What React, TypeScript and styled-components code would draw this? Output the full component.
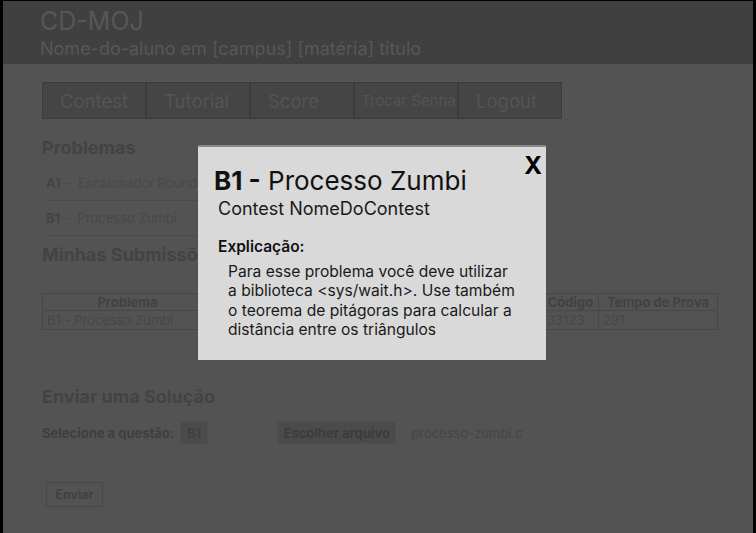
import React from "react";
import styled, { createGlobalStyle } from "styled-components";

const Global = createGlobalStyle`
  html, body { margin: 0; padding: 0; background: #000; }
  body { font-family: Inter, "Noto Sans", sans-serif; }
  * { box-sizing: border-box; }
`;

const Page = styled.div`
  position: relative;
  margin: 1px 3px 0 3px;
  height: 532px;
  background: #535353;
  overflow: hidden;
`;

const Header = styled.header`
  height: 63px;
  background: #404040;
  padding: 5px 0 0 37px;
  color: #575757;
`;

const Title = styled.div`
  font-size: 25px;
  line-height: 30px;
`;

const Subtitle = styled.div`
  margin-top: 2px;
  font-size: 18px;
  line-height: 21px;
`;

const Main = styled.main`
  display: flex;
  flex-direction: column;
  align-items: flex-start;
  padding-left: 39px;
`;

const Nav = styled.nav`
  display: flex;
  margin-top: 18px;
`;

const NavButton = styled.div<{ $small?: boolean }>`
  width: 104px;
  height: 37px;
  display: flex;
  align-items: center;
  padding-left: ${(p) => (p.$small ? "6px" : "17px")};
  background: #454545;
  border: 1px solid #3b3b3b;
  color: #545454;
  font-size: ${(p) => (p.$small ? "15px" : "18.5px")};
  white-space: nowrap;
  overflow: hidden;
`;

const SectionTitle = styled.h2<{ $top: number }>`
  margin: ${(p) => p.$top}px 0 0 0;
  font-size: 18px;
  line-height: 20px;
  font-weight: 700;
  color: #434343;
`;

const ProblemList = styled.div`
  margin: 8px 0 0 4px;
  width: 152px;
  display: flex;
  flex-direction: column;
`;

const ProblemRow = styled.div`
  height: 35px;
  display: flex;
  align-items: center;
  border-bottom: 1px solid #4b4b4b;
  font-size: 13px;
  color: #484848;
  white-space: nowrap;
  overflow: hidden;
`;

const Code = styled.span`
  font-weight: 700;
  color: #434343;
`;

const ProblemName = styled.span`
  margin-left: 4px;
`;

const Table = styled.table`
  margin-top: 28px;
  width: 675px;
  table-layout: fixed;
  border-collapse: collapse;
  font-size: 13px;
`;

const Th = styled.th`
  height: 17px;
  padding: 0;
  border: 1px solid #474747;
  font-weight: 700;
  color: #424242;
  text-align: center;
  line-height: 15px;
  white-space: nowrap;
  overflow: hidden;
`;

const Td = styled.td`
  height: 19px;
  padding: 0 0 0 4px;
  border: 1px solid #474747;
  color: #474747;
  line-height: 17px;
  white-space: nowrap;
  overflow: hidden;
`;

const FormRow = styled.div`
  margin-top: 14px;
  display: flex;
  align-items: center;
  height: 23px;
`;

const Label = styled.span`
  font-size: 13px;
  font-weight: 700;
  color: #3f3f3f;
`;

const SelectBox = styled.div`
  margin-left: 6px;
  width: 28px;
  height: 23px;
  display: flex;
  align-items: center;
  justify-content: center;
  background: #4b4b4b;
  border: 1px solid #4f4f4f;
  font-size: 13px;
  font-weight: 700;
  color: #3f3f3f;
`;

const FileButton = styled.div`
  margin-left: 69px;
  width: 119px;
  height: 23px;
  display: flex;
  align-items: center;
  justify-content: center;
  background: #4b4b4b;
  border: 1px solid #4f4f4f;
  font-size: 13px;
  font-weight: 700;
  color: #3c3c3c;
`;

const FileName = styled.span`
  margin-left: 15px;
  font-size: 13px;
  color: #454545;
`;

const SubmitButton = styled.div`
  margin: 38px 0 0 4px;
  width: 57px;
  height: 25px;
  display: flex;
  align-items: center;
  justify-content: center;
  border: 1px solid #474747;
  font-size: 12.5px;
  font-weight: 700;
  color: #414141;
`;

const Modal = styled.div`
  position: absolute;
  left: 195px;
  top: 144px;
  width: 348px;
  height: 215px;
  background: #d9d9d9;
  border-top: 2px solid #8a8a8a;
  padding: 19px 0 0 16px;
  color: #111;
`;

const Close = styled.div`
  position: absolute;
  right: 4px;
  top: 7px;
  font-size: 24px;
  line-height: 24px;
  font-weight: 700;
  color: #000;
`;

const ModalTitle = styled.div`
  font-size: 26px;
  line-height: 30px;
  font-weight: 400;
  color: #111;
`;

const Strong = styled.span`
  font-weight: 700;
`;

const ContestName = styled.div`
  margin: 3px 0 0 4px;
  font-size: 18px;
  line-height: 20px;
  color: #1a1a1a;
`;

const ExplainLabel = styled.div`
  margin: 19px 0 0 4px;
  font-size: 15.5px;
  line-height: 18px;
  font-weight: 600;
  color: #111;
`;

const Explain = styled.p`
  margin: 6px 0 0 14px;
  font-size: 15.6px;
  line-height: 19.4px;
  color: #1a1a1a;
`;

const problems = [
  { code: "A1", name: "Escalonador Round Robin" },
  { code: "B1", name: "Processo Zumbi" },
];

const columns: { label: string; width: number }[] = [
  { label: "Problema", width: 170 },
  { label: "", width: 120 },
  { label: "", width: 120 },
  { label: "", width: 90 },
  { label: "Código", width: 56 },
  { label: "Tempo de Prova", width: 119 },
];

const row = ["B1 - Processo Zumbi", "", "", "", "33123", "291"];

export default function App() {
  return (
    <>
      <Global />
      <Page>
        <Header>
          <Title>CD-MOJ</Title>
          <Subtitle>Nome-do-aluno em [campus] [matéria] título</Subtitle>
        </Header>
        <Main>
          <Nav>
            <NavButton>Contest</NavButton>
            <NavButton>Tutorial</NavButton>
            <NavButton>Score</NavButton>
            <NavButton $small>Trocar Senha</NavButton>
            <NavButton>Logout</NavButton>
          </Nav>

          <SectionTitle $top={19}>Problemas</SectionTitle>
          <ProblemList>
            {problems.map((p) => (
              <ProblemRow key={p.code}>
                <Code>{p.code}</Code>&nbsp;-&nbsp;
                <ProblemName>{p.name}</ProblemName>
              </ProblemRow>
            ))}
          </ProblemList>

          <SectionTitle $top={9}>Minhas Submissões</SectionTitle>
          <Table>
            <colgroup>
              {columns.map((c, i) => (
                <col key={i} style={{ width: c.width }} />
              ))}
            </colgroup>
            <thead>
              <tr>
                {columns.map((c, i) => (
                  <Th key={i}>{c.label}</Th>
                ))}
              </tr>
            </thead>
            <tbody>
              <tr>
                {row.map((v, i) => (
                  <Td key={i}>{v}</Td>
                ))}
              </tr>
            </tbody>
          </Table>

          <SectionTitle $top={57}>Enviar uma Solução</SectionTitle>
          <FormRow>
            <Label>Selecione a questão:</Label>
            <SelectBox>B1</SelectBox>
            <FileButton>Escolher arquivo</FileButton>
            <FileName>processo-zumbi.c</FileName>
          </FormRow>
          <SubmitButton>Enviar</SubmitButton>
        </Main>

        <Modal>
          <Close>X</Close>
          <ModalTitle>
            <Strong>B1 -</Strong> Processo Zumbi
          </ModalTitle>
          <ContestName>Contest NomeDoContest</ContestName>
          <ExplainLabel>Explicação:</ExplainLabel>
          <Explain>
            Para esse problema você deve utilizar
            <br />
            a biblioteca &lt;sys/wait.h&gt;. Use também
            <br />
            o teorema de pitágoras para calcular a
            <br />
            distância entre os triângulos
          </Explain>
        </Modal>
      </Page>
    </>
  );
}
